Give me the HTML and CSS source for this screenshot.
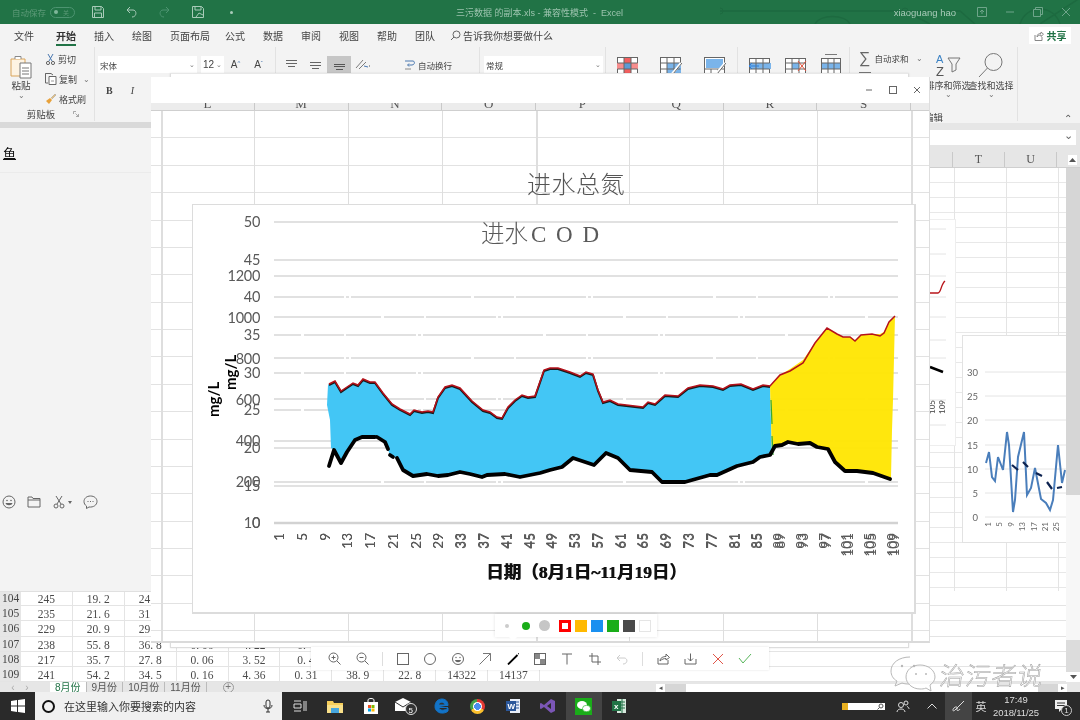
FILE: index.html
```html
<!DOCTYPE html>
<html lang="zh">
<head>
<meta charset="utf-8">
<title>Excel</title>
<link rel="stylesheet" href="styles.css">
</head>
<body>
<div class="desk">
  <header class="titlebar">
    <svg class="circuit" width="360" height="24" viewBox="0 0 360 24"><path d="M0 11H185L210 24M185 11L240 11L255 24M95 24C100 14 125 14 130 24M300 24C306 4 334 4 340 24M320 24L360 -2" fill="none" stroke="#1d6a40" stroke-width="1.5"/><circle cx="0" cy="11" r="3" fill="none" stroke="#1d6a40"/><circle cx="185" cy="11" r="3" fill="none" stroke="#1d6a40"/></svg>
    <span class="autosave">自动保存</span>
    <span class="toggle"><i></i><b>关</b></span>
    <span class="qat"><svg width="14" height="14" viewBox="0 0 14 14"><path d="M1.5 1.5H10.5L12.5 3.5V12.5H1.5ZM4 1.5V5H10V1.5M3.5 12.5V8H10.5V12.5" fill="none" stroke="#a9cbb9"/></svg></span>
    <span class="qat"><svg width="14" height="14" viewBox="0 0 14 14"><path d="M3 5L6 2M3 5L6 8M3 5H9C13 5 13 12 8 12" fill="none" stroke="#a9cbb9"/></svg></span>
    <span class="qat"><svg width="14" height="14" viewBox="0 0 14 14"><path d="M11 5L8 2M11 5L8 8M11 5H5C1 5 1 12 6 12" fill="none" stroke="#4d9471"/></svg></span>
    <span class="qat"><svg width="14" height="14" viewBox="0 0 14 14"><path d="M1.5 1.5H10.5L12.5 3.5V12.5H1.5ZM4 1.5V5H10V1.5M5 12L8 8L12 10" fill="none" stroke="#a9cbb9"/></svg></span>
    <span class="qat-dot"></span>
    <span class="doc-title">三污数据 的副本.xls - 兼容性模式 &nbsp;- &nbsp;Excel</span>
    <span class="user">xiaoguang hao</span>
    <span class="wbtn"><svg width="10" height="10" viewBox="0 0 10 10"><path d="M.5 .5H9.5V9.5H.5ZM5 3V7M3 5L5 3L7 5" fill="none" stroke="#6ea58a"/></svg></span>
    <span class="wbtn"><svg width="10" height="10" viewBox="0 0 10 10"><path d="M1 5H9" stroke="#6ea58a"/></svg></span>
    <span class="wbtn"><svg width="10" height="10" viewBox="0 0 10 10"><path d="M.5 2.5H7.5V9.5H.5ZM2.5 2.5V.5H9.5V7.5H7.5" fill="none" stroke="#6ea58a"/></svg></span>
    <span class="wbtn"><svg width="10" height="10" viewBox="0 0 10 10"><path d="M1 1L9 9M9 1L1 9" stroke="#6ea58a"/></svg></span>
  </header>

  <nav class="tabs">
    <span>文件</span><span class="tab-on">开始</span><span>插入</span><span>绘图</span><span>页面布局</span><span class="tab-tight">公式</span><span>数据</span><span>审阅</span><span>视图</span><span>帮助</span><span>团队</span>
    <span class="tellme"><svg width="11" height="11" viewBox="0 0 11 11"><circle cx="6.5" cy="4.5" r="3.5" fill="none" stroke="#666"/><path d="M4 7L1 10" stroke="#666"/></svg>告诉我你想要做什么</span>
    <span class="share"><svg width="10" height="10" viewBox="0 0 10 10"><path d="M1 4V9.5H8V6M3 6C3 3 5 2.5 7 2.5V1L9.5 3.2L7 5.5V4C5.5 4 4 4.5 3 6Z" fill="none" stroke="#888"/></svg>共享</span>
  </nav>

  <section class="ribbon">
    <div class="group g-clip">
      <div class="g-body">
        <div class="paste">
          <svg width="22" height="25" viewBox="0 0 22 25"><path d="M1 5H15V22H1Z" fill="#fdf3e3" stroke="#d9a45b"/><path d="M5 5V2.5H11V5" fill="#fff" stroke="#888"/><path d="M10 9H21V24H10Z" fill="#fff" stroke="#777"/><path d="M12 14H19M12 17H19M12 20H19" stroke="#777"/></svg>
          <span>粘贴</span><em>⌄</em>
        </div>
        <div class="clip-list">
          <span><svg width="11" height="12" viewBox="0 0 11 12"><path d="M3 1L7 8M8 1L4 8" stroke="#4a78b0" fill="none"/><circle cx="3" cy="10" r="1.6" fill="none" stroke="#666"/><circle cx="8" cy="10" r="1.6" fill="none" stroke="#666"/></svg>剪切</span>
          <span><svg width="12" height="12" viewBox="0 0 12 12"><path d="M.5 2.5V.5H6L8 2M.5 .5V10H3" fill="none" stroke="#666"/><path d="M4 3.5H11V11.5H4Z" fill="#fff" stroke="#666"/><path d="M6 8H9" stroke="#999"/></svg>复制<em>⌄</em></span>
          <span><svg width="12" height="12" viewBox="0 0 12 12"><path d="M1 8L4 11L7 7L5 5Z" fill="#e8a13a"/><path d="M6 5L10 1L11 2L7 6" fill="#e9c27c" stroke="#999" stroke-width=".5"/></svg>格式刷</span>
        </div>
      </div>
      <div class="g-label">剪贴板<svg width="6" height="6" viewBox="0 0 6 6"><path d="M.5 3V.5H3M2.5 2.5L5.5 5.5M5.5 3V5.5H3" fill="none" stroke="#888" stroke-width=".7"/></svg></div>
    </div>

    <div class="group g-font">
      <div class="r-row">
        <span class="combo c-font">宋体<em>⌄</em></span>
        <span class="combo c-size">12<em>⌄</em></span>
        <span class="grow">A<sup>^</sup></span>
        <span class="grow">A<sup>ˇ</sup></span>
      </div>
      <div class="r-row r-style"><b>B</b><i>I</i></div>
    </div>

    <div class="group g-align">
      <span class="al"><svg width="13" height="10" viewBox="0 0 13 10"><path d="M1 .5H12M1 3.5H12M3 6.5H10" stroke="#666"/></svg></span>
      <span class="al"><svg width="13" height="10" viewBox="0 0 13 10"><path d="M1 2.5H12M1 5.5H12M3 8.5H10" stroke="#666"/></svg></span>
      <span class="al al-on"><svg width="13" height="10" viewBox="0 0 13 10"><path d="M1 4.5H12M1 6.5H12M3 9.5H10" stroke="#555"/></svg></span>
      <span class="al"><svg width="16" height="11" viewBox="0 0 16 11"><path d="M1 9L8 1M4 10L11 3" stroke="#7b7b7b"/><path d="M9 7L13 8" stroke="#4a78b0"/><path d="M14 7H15" stroke="#555"/></svg></span>
      <span class="wrap"><svg width="11" height="12" viewBox="0 0 11 12"><path d="M1 2H9C11 2 11 6 8 6H4M5 4.5L3.5 6L5 7.5" fill="none" stroke="#4a78b0"/><path d="M1 10H7" stroke="#888"/></svg>自动换行</span>
    </div>

    <div class="group g-num"><span class="combo c-num">常规<em>⌄</em></span></div>

    <div class="group g-tables">
      <svg width="21" height="18" viewBox="0 0 21 18"><rect x=".5" y=".5" width="20" height="17" fill="#fff" stroke="#666"/><path d="M0 6H21V12H0Z" fill="#f78d8d"/><rect x="7" y="1" width="7" height="16" fill="#f25f5f"/><rect x="7" y="6" width="7" height="6" fill="#5b9bd5"/><path d="M.5 6H20.5M.5 12H20.5M7 .5V17.5M14 .5V17.5" stroke="#666"/></svg>
      <svg width="22" height="18" viewBox="0 0 22 18"><rect x=".5" y=".5" width="20" height="17" fill="#fff" stroke="#666"/><rect x="7" y="6" width="14" height="12" fill="#7ab4ea"/><path d="M.5 6H20.5M.5 12H20.5M7 .5V17.5M14 .5V17.5" stroke="#666"/><path d="M12 17L21 6" stroke="#fff" stroke-width="2.5"/><path d="M13 17L22 6" stroke="#666"/></svg>
      <svg width="22" height="18" viewBox="0 0 22 18"><rect x=".5" y=".5" width="20" height="17" fill="#fff" stroke="#666"/><rect x="2" y="2" width="17" height="9" fill="#7ab4ea"/><path d="M.5 12H20.5M7 12V17.5M14 12V17.5" stroke="#666"/><path d="M12 17L21 6" stroke="#fff" stroke-width="2.5"/><path d="M13 17L22 6" stroke="#666"/></svg>
    </div>

    <div class="group g-cells">
      <svg width="22" height="16" viewBox="0 0 22 16"><rect x=".5" y=".5" width="20" height="15" fill="#fff" stroke="#666"/><rect x="1" y="5" width="21" height="6" fill="#7ab4ea"/><path d="M.5 5H20.5M.5 11H20.5M7 .5V15.5M14 .5V15.5" stroke="#666"/><path d="M0 8H10M3 5L0 8L3 11" fill="none" stroke="#2f7ed8"/></svg>
      <svg width="22" height="16" viewBox="0 0 22 16"><rect x=".5" y=".5" width="20" height="15" fill="#fff" stroke="#666"/><rect x="7" y="5" width="7" height="6" fill="#7ab4ea"/><path d="M.5 5H20.5M.5 11H20.5M7 .5V15.5M14 .5V15.5" stroke="#666"/><path d="M13 3L21 13M21 3L13 13" stroke="#e0533d"/></svg>
      <svg width="20" height="20" viewBox="0 0 20 20"><rect x=".5" y="4.5" width="19" height="15" fill="#fff" stroke="#666"/><rect x="1" y="9" width="18" height="6" fill="#7ab4ea"/><path d="M.5 9H19.5M.5 15H19.5M7 4.5V19.5M13 4.5V19.5" stroke="#666"/><path d="M4 .5H16" stroke="#7a7a7a"/></svg>
    </div>

    <div class="group g-edit">
      <div class="sum"><span class="sigma">∑</span><span>自动求和</span><em>⌄</em></div>
      <div class="big"><svg width="26" height="26" viewBox="0 0 26 26"><text x="1" y="11" class="sort-a">A</text><text x="1" y="24" class="sort-z">Z</text><path d="M13 6H25L21 12V18L17 20V12Z" fill="none" stroke="#777"/></svg><span>排序和筛选</span><em>⌄</em></div>
      <div class="big"><svg width="26" height="26" viewBox="0 0 26 26"><circle cx="15.500" cy="10" r="8.500" fill="none" stroke="#777"/><path d="M9.500 16L1 25" stroke="#777"/></svg><span>查找和选择</span><em>⌄</em></div>
      <div class="g-edit-label">编辑</div>
    </div>
    <span class="collapse">⌃</span>
  </section>

  <section class="formula">
    <div class="f-box"><em>⌄</em></div>
    <div class="col-head"><span></span><span>T</span><span>U</span><span class="scroll-up"><svg width="7" height="4" viewBox="0 0 7 4"><path d="M0 4L3.500 0L7 4Z" fill="#555"/></svg></span></div>
  </section>

  <section class="work">
    <div class="sheet">
      <div class="data">
        <div class="row"><b>104</b><span>245</span><span>19. 2</span><span>24. 9</span></div>
        <div class="row"><b>105</b><span>235</span><span>21. 6</span><span>31. 2</span></div>
        <div class="row"><b>106</b><span>229</span><span>20. 9</span><span>29. 5</span></div>
        <div class="row"><b>107</b><span>238</span><span>55. 8</span><span>36. 8</span><span>0. 06</span><span>4. 22</span><span>0. 4</span></div>
        <div class="row"><b>108</b><span>217</span><span>35. 7</span><span>27. 8</span><span>0. 06</span><span>3. 52</span><span>0. 4</span></div>
        <div class="row"><b>109</b><span>241</span><span>54. 2</span><span>34. 5</span><span>0. 16</span><span>4. 36</span><span>0. 31</span><span>38. 9</span><span>22. 8</span><span>14322</span><span>14137</span></div>
      </div>
    </div>
    <div class="vscroll"><i class="v-thumb"></i><i class="v-free"></i><i class="v-low"></i><i class="v-arrow"><svg width="7" height="4" viewBox="0 0 7 4"><path d="M0 0L3.500 4L7 0Z" fill="#555"/></svg></i></div>
  </section>

  <footer class="sheetbar">
    <span class="nav">‹</span><span class="nav">›</span>
    <span class="st st-on">8月份</span><span class="st">9月份</span><span class="st">10月份</span><span class="st">11月份</span>
    <span class="add">+</span>
    <div class="hscroll"><i class="h-arrow">◂</i><i class="h-track1"></i><i class="h-thumb"></i><i class="h-track2"></i><i class="h-arrow">▸</i></div>
  </footer>

  <footer class="taskbar">
    <span class="start"><svg width="14" height="14" viewBox="0 0 14 14"><path d="M0 2L6 1V6.500H0ZM7 1L14 0V6.500H7ZM0 7.500H6V13L0 12ZM7 7.500H14V14L7 13Z" fill="#fff"/></svg></span>
    <div class="search">
      <span class="cortana"></span>
      <span class="s-text">在这里输入你要搜索的内容</span>
      <svg width="10" height="14" viewBox="0 0 10 14"><rect x="3" y="1" width="4" height="8" rx="2" fill="none" stroke="#333"/><path d="M1 6C1 11 9 11 9 6M5 10V13M3 13H7" fill="none" stroke="#333"/></svg>
    </div>
    <span class="tb"><svg width="14" height="12" viewBox="0 0 14 12"><path d="M1 1H8M1 11H8M1 4H8V8H1ZM11 1V11M13 1V11" fill="none" stroke="#ddd"/></svg></span>
    <span class="tb"><svg width="16" height="13" viewBox="0 0 16 13"><path d="M0 1H6L7 3H16V13H0Z" fill="#f6ce5b"/><rect x="0" y="5" width="16" height="8" fill="#f9e08a"/><rect x="4" y="8" width="8" height="5" fill="#47a7e0"/></svg></span>
    <span class="tb"><svg width="16" height="16" viewBox="0 0 16 16"><path d="M1 4H15V16H1Z" fill="#fff"/><path d="M5 5V2C5 0 11 0 11 2V5" fill="none" stroke="#fff"/><rect x="5" y="7" width="3" height="3" fill="#f25022"/><rect x="8.500" y="7" width="3" height="3" fill="#7fba00"/><rect x="5" y="10.500" width="3" height="3" fill="#00a4ef"/><rect x="8.500" y="10.500" width="3" height="3" fill="#ffb900"/></svg></span>
    <span class="tb"><svg width="24" height="18" viewBox="0 0 24 18"><path d="M1 5L9 1L17 5V14H1Z" fill="#fff"/><path d="M1 5L9 10L17 5" fill="none" stroke="#333"/><circle cx="17" cy="12" r="5.500" fill="#333" stroke="#ddd"/><text x="14.500" y="15.500" class="mail-n">5</text></svg></span>
    <span class="tb"><svg width="16" height="16" viewBox="0 0 16 16"><path d="M3 7.500H14C14 2 10 1 8 1C4 1 1 4 1 8.500C1 13 5 15.500 9 15C11 15 13 14 14 13V10C11 13 5 13 5 9.500H14" fill="#1273c7" stroke="#1273c7"/><path d="M5 6.500C5.500 4 10 4 10.500 6.500Z" fill="#333"/></svg></span>
    <span class="tb"><i class="chrome"></i></span>
    <span class="tb"><svg width="16" height="16" viewBox="0 0 16 16"><rect x="5" y="1" width="10" height="14" fill="#e8eef8"/><path d="M9 4H14M9 7H14M9 10H14" stroke="#2b579a"/><rect x="1" y="3" width="10" height="10" fill="#2b579a"/><text x="2.500" y="11" class="word-w">W</text></svg></span>
    <span class="tb"><svg width="16" height="16" viewBox="0 0 16 16"><path d="M11 1L15 3V13L11 15L4 9L1 11L0 10.500V5.500L1 5L4 7ZM11 5L7 8L11 11Z" fill="#7b56b6"/></svg></span>
    <span class="tb tb-on"><svg width="17" height="17" viewBox="0 0 17 17"><rect width="17" height="17" fill="#1aad19"/><ellipse cx="7" cy="7" rx="5" ry="4" fill="#fff"/><ellipse cx="11.500" cy="10.500" rx="4" ry="3.200" fill="#fff" stroke="#1aad19" stroke-width=".6"/></svg></span>
    <span class="tb"><svg width="16" height="16" viewBox="0 0 16 16"><rect x="6" y="1" width="9" height="14" fill="#d6e8dc"/><path d="M8 4H14M8 7H14M8 10H14M11 1V15" stroke="#217346"/><rect x="1" y="3" width="9" height="10" fill="#217346"/><text x="3" y="11" class="word-w">x</text></svg></span>
    <div class="tray">
      <span class="tray-search"><i></i><svg width="7" height="7" viewBox="0 0 7 7"><circle cx="4" cy="3" r="2" fill="none" stroke="#555"/><path d="M2.500 4.500L.5 6.500" stroke="#555"/></svg></span>
      <span class="ti ti-people"><svg width="14" height="13" viewBox="0 0 14 13"><circle cx="5" cy="5" r="2.500" fill="none" stroke="#ddd"/><path d="M1 12C1 8 9 8 9 12" fill="none" stroke="#ddd"/><circle cx="10" cy="3" r="2" fill="none" stroke="#ddd"/><path d="M11 6.500C12.500 7 13 8 13 9" fill="none" stroke="#ddd"/></svg></span>
      <span class="ti ti-up"><svg width="10" height="6" viewBox="0 0 10 6"><path d="M.5 5.500L5 1L9.500 5.500" fill="none" stroke="#ddd"/></svg></span>
      <span class="ti ti-pen"><svg width="13" height="13" viewBox="0 0 13 13"><path d="M12 1L5 8L3 10C1 12 0 10 2 8C4 6 6 7 5 9C4 11 7 11 8 9" fill="none" stroke="#ddd"/></svg></span>
      <span class="ti ti-lang">英</span>
      <span class="clock"><span>17:49</span><span>2018/11/25</span></span>
      <span class="ti ti-note"><svg width="14" height="14" viewBox="0 0 14 14"><path d="M1 1H13V10H8L5 13V10H1Z" fill="#eee"/><path d="M3 4H11M3 6.500H11" stroke="#333"/></svg><b>1</b></span>
    </div>
  </footer>

  <!-- Left chat window -->
  <aside class="chat">
    <div class="chat-band"></div>
    <div class="chat-name"><u>鱼</u></div>
    <div class="chat-tools">
      <svg width="14" height="14" viewBox="0 0 14 14"><circle cx="7" cy="7" r="6" fill="none" stroke="#666"/><circle cx="5" cy="5.500" r=".8" fill="#666"/><circle cx="9" cy="5.500" r=".8" fill="#666"/><path d="M3.500 8H10.500C10 11 4 11 3.500 8Z" fill="#666"/></svg>
      <svg width="14" height="12" viewBox="0 0 14 12"><path d="M1 1H5L6 2.500H13V11H1ZM1 4H13" fill="none" stroke="#666"/></svg>
      <span class="sc"><svg width="14" height="14" viewBox="0 0 14 14"><path d="M4 1L9 9M10 1L5 9" stroke="#666" fill="none"/><circle cx="4" cy="11" r="2" fill="none" stroke="#666"/><circle cx="10" cy="11" r="2" fill="none" stroke="#666"/></svg><i></i></span>
      <svg width="15" height="14" viewBox="0 0 15 14"><path d="M7.500 1C3.500 1 1 3.500 1 6.500C1 8.500 2 10 3.500 11V13.500L6 12C10.500 12.500 14 10 14 6.500C14 3.500 11.500 1 7.500 1Z" fill="none" stroke="#666"/><path d="M4.500 6.500H5.500M7 6.500H8M9.500 6.500H10.500" stroke="#666"/></svg>
    </div>
  </aside>

  <!-- Right-side embedded charts on the sheet -->
  <div class="mini-card">
    <svg width="27" height="227" viewBox="929 219 27 227">
      <g class="mini-grid"><path d="M929 229H946M929 254H946M929 276H946M929 297H946M929 317H946M929 340H946M929 358H946M929 400H946M929 425H946"/></g>
      <path d="M929 293H938C941 293 941 284 945 281" fill="none" stroke="#b8141a" stroke-width="1.400"/>
      <path d="M930 367L943 372" stroke="#000" stroke-width="2.500"/>
      <text transform="translate(935 414) rotate(-90)" class="mini-x">105</text>
      <text transform="translate(945 414) rotate(-90)" class="mini-x">109</text>
    </svg>
  </div>
  <div class="blue-card">
    <svg width="104" height="208" viewBox="962 335 104 208">
      <path class="blue-grid" d="M985 372H1066M985 396H1066M985 420H1066M985 445H1066M985 469H1066M985 493H1066M985 517H1066"/>
      <text x="978" y="376" class="blue-y">30</text><text x="978" y="400" class="blue-y">25</text><text x="978" y="424" class="blue-y">20</text><text x="978" y="449" class="blue-y">15</text><text x="978" y="473" class="blue-y">10</text><text x="978" y="497" class="blue-y">5</text><text x="978" y="521" class="blue-y">0</text>
      <polyline points="986,463 989,452 992,477 995,481 998,457 1003,470 1007,432 1009,445 1013,512 1015,500 1018,457 1024,432 1027,495 1031,488 1035,468 1041,499 1046,503 1050,510 1053,500 1058,445 1062,483 1065,470" fill="none" stroke="#4a7ebb" stroke-width="2"/>
      <path d="M1012 465L1018 470M1023 462L1028 467M1036 473L1042 476M1047 482L1052 489M1057 488L1062 487" stroke="#0d2350" stroke-width="2.200" fill="none"/>
      <text transform="translate(991 522) rotate(-90)" class="blue-x">1</text><text transform="translate(1002 522) rotate(-90)" class="blue-x">5</text><text transform="translate(1014 522) rotate(-90)" class="blue-x">9</text><text transform="translate(1025 522) rotate(-90)" class="blue-x">13</text><text transform="translate(1037 522) rotate(-90)" class="blue-x">17</text><text transform="translate(1048 522) rotate(-90)" class="blue-x">21</text><text transform="translate(1059 522) rotate(-90)" class="blue-x">25</text>
    </svg>
  </div>

  <!-- Screenshot windows -->
  <div class="win-back"></div>
  <div class="win-main">
    <div class="win-title">
      <svg width="8" height="8" viewBox="0 0 8 8"><path d="M1 4H7" stroke="#666"/></svg>
      <svg width="8" height="8" viewBox="0 0 8 8"><rect x=".5" y=".5" width="7" height="7" fill="none" stroke="#666"/></svg>
      <svg width="8" height="8" viewBox="0 0 8 8"><path d="M1 1L7 7M7 1L1 7" stroke="#666"/></svg>
    </div>
    <div class="win-head"><span>L</span><span>M</span><span>N</span><span>O</span><span>P</span><span>Q</span><span>R</span><span>S</span></div>
    <div class="win-grid">
      <div class="under-title">进水总氮</div>
      <div class="chart">
        <svg class="chart-svg" width="723" height="409" viewBox="192 204 723 409">
          <g class="grid-lines">
            <path d="M274 222H898M274 260H898M274 276H898"/>
            <path class="gap" d="M274 297H898M274 358H898M274 441H898"/>
            <path class="gap gap2" d="M274 317H898M274 399H898M274 482H898"/>
            <path class="gap gap3" d="M274 335H898M274 373H898M274 410H898"/>
            <path d="M274 448H898"/>
            <path d="M274 486H898"/>
            <path class="base" d="M274 523H898"/>
          </g>
          <path fill="#43c6f5" d="M328,385 335,381 341,391 347,387 353,383 358,385 363,379 370,382 375,382 383,393 392,404 400,409 410,414 414,410 422,412 428,411 433,412 438,397 445,387 452,385 460,388 472,401 483,410 490,412 497,417 502,418 508,407 515,400 522,395 528,397 535,396 544,370 550,368 558,368 570,372 580,376 586,372 593,374 598,390 603,402 610,400 618,404 643,407 648,402 655,404 665,395 678,396 688,388 700,385 713,386 723,389 730,385 741,384 753,389 763,385 770,386 772,455 760,457 753,462 737,466 717,475 710,475 685,482 662,482 652,472 630,470 618,458 606,453 594,465 573,458 562,467 550,470 540,473 520,477 505,474 487,475 482,477 470,474 460,472 448,475 438,476 427,474 413,476 403,470 397,458 390,455 385,442 375,437 362,437 355,440 347,452 341,463 334,450 331,448 330,420 327,405Z"/>
          <path fill="#ffe600" fill-opacity=".95" d="M770,386 780,375 790,369 803,360 815,343 827,328 837,334 843,337 850,337 855,341 861,335 872,334 880,334 884,332 889,322 895,316 893,400 892,430 891,478 873,473 857,471 845,471 835,462 828,449 817,447 810,443 798,444 788,442 782,445 775,446 772,455Z"/>
          <path d="M771 400L772 424M772 436L773 455" stroke="#35a835" stroke-width="1.200"/>
          <polyline class="up-black" points="329,385 335,382 341,392 347,388 353,384 358,386 363,380 370,383 375,383 383,394 392,405 400,410 410,415 414,411 422,413 428,412 433,413 438,398 445,388 452,386 460,389 472,402 483,411 490,413 497,418 502,419 508,408 515,401 522,396 528,398 535,397 544,371 550,369 558,369 570,373 580,377 586,373 593,375 598,391 603,403 610,401 618,405 643,408 648,403 655,405 665,396 678,397 688,389 700,386 713,387 723,390 730,386 741,385 753,390 763,386 770,387"/>
          <polyline class="up-red" points="329,384 335,381 341,391 347,387 353,383 358,385 363,379 370,382 375,382 383,393 392,404 400,409 410,414 414,410 422,412 428,411 433,412 438,397 445,387 452,385 460,388 472,401 483,410 490,412 497,417 502,418 508,407 515,400 522,395 528,397 535,396 544,370 550,368 558,368 570,372 580,376 586,372 593,374 598,390 603,402 610,400 618,404 643,407 648,402 655,404 665,395 678,396 688,388 700,385 713,386 723,389 730,385 741,384 753,389 763,385 770,386 780,375 790,371 803,363 815,343 827,328 837,334 843,337 850,337 855,341 861,335 872,334 880,336 884,333 889,322 895,316"/>
          <polyline class="low" points="329,466 334,450 341,463 347,452 355,440 362,437 375,437"/>
          <polyline class="low" points="377,437 385,442 388,449"/>
          <polyline class="low" points="390,455 393,457"/>
          <polyline class="low" points="397,458 403,470 413,476 427,474 438,476 448,475 460,472 470,474 482,477 487,475 505,474 520,477 540,473 550,470 562,467 573,458 594,465 606,453 618,458 630,470 652,472 662,482 685,482 710,475 717,475 737,466 753,462 760,457 770,455 775,446 782,445 788,442 798,444 810,443 817,447 828,449 835,462 845,471 857,471 873,473 890,479"/>
          <g class="y-a"><text x="260" y="227">50</text><text x="260" y="265">45</text><text x="260" y="302">40</text><text x="260" y="340">35</text><text x="260" y="378">30</text><text x="260" y="415">25</text><text x="260" y="453">20</text><text x="260" y="491">15</text><text x="260" y="528">10</text></g>
          <g class="y-a"><text x="260" y="281">1200</text><text x="260" y="323">1000</text><text x="260" y="364">800</text><text x="260" y="405">600</text><text x="260" y="446">400</text><text x="260" y="487">200</text><text x="260" y="528">0</text></g>
          <text class="unit" transform="translate(219 417) rotate(-90)">mg/L</text>
          <text class="unit" transform="translate(236 390) rotate(-90)">mg/L</text>
          <g id="xa" class="x-a">
            <text transform="translate(284 533) rotate(-90)">1</text><text transform="translate(307 533) rotate(-90)">5</text><text transform="translate(330 533) rotate(-90)">9</text><text transform="translate(352 533) rotate(-90)">13</text><text transform="translate(375 533) rotate(-90)">17</text><text transform="translate(398 533) rotate(-90)">21</text><text transform="translate(421 533) rotate(-90)">25</text><text transform="translate(443 533) rotate(-90)">29</text><text transform="translate(466 533) rotate(-90)">33</text><text transform="translate(489 533) rotate(-90)">37</text><text transform="translate(512 533) rotate(-90)">41</text><text transform="translate(535 533) rotate(-90)">45</text><text transform="translate(557 533) rotate(-90)">49</text><text transform="translate(580 533) rotate(-90)">53</text><text transform="translate(603 533) rotate(-90)">57</text><text transform="translate(626 533) rotate(-90)">61</text><text transform="translate(648 533) rotate(-90)">65</text><text transform="translate(671 533) rotate(-90)">69</text><text transform="translate(694 533) rotate(-90)">73</text><text transform="translate(717 533) rotate(-90)">77</text><text transform="translate(740 533) rotate(-90)">81</text><text transform="translate(762 533) rotate(-90)">85</text><text transform="translate(785 533) rotate(-90)">89</text><text transform="translate(808 533) rotate(-90)">93</text><text transform="translate(831 533) rotate(-90)">97</text><text transform="translate(853 533) rotate(-90)">101</text><text transform="translate(876 533) rotate(-90)">105</text><text transform="translate(899 533) rotate(-90)">109</text>
          </g>
          <use href="#xa" transform="translate(279 0) scale(.997 1) translate(-279 0)"/>
          <text class="date" x="486" y="578">日期（8月1日~11月19日）</text>
          <text class="date" x="486.700" y="578">日期（8月1日~11月19日）</text>
        </svg>
        <div class="chart-title">进水<span>C O D</span></div>
      </div>
    </div>
  </div>

  <div class="colors">
    <i class="dot d1"></i><i class="dot d2"></i><i class="dot d3"></i>
    <i class="sw sw-red"></i><i class="sw sw-yellow"></i><i class="sw sw-blue"></i><i class="sw sw-green"></i><i class="sw sw-dark"></i><i class="sw sw-white"></i>
  </div>

  <div class="toolbar">
    <span class="tool"><svg width="13" height="13" viewBox="0 0 13 13"><circle cx="5.500" cy="5.500" r="4.500" fill="none" stroke="#666"/><path d="M9 9L12.500 12.500M3.500 5.500H7.500M5.500 3.500V7.500" stroke="#666"/></svg></span>
    <span class="tool"><svg width="13" height="13" viewBox="0 0 13 13"><circle cx="5.500" cy="5.500" r="4.500" fill="none" stroke="#666"/><path d="M9 9L12.500 12.500M3.500 5.500H7.500" stroke="#666"/></svg></span>
    <span class="sep"></span>
    <span class="tool"><svg width="12" height="12" viewBox="0 0 12 12"><rect x=".5" y=".5" width="11" height="11" fill="none" stroke="#666"/></svg></span>
    <span class="tool"><svg width="12" height="12" viewBox="0 0 12 12"><circle cx="6" cy="6" r="5.500" fill="none" stroke="#666"/></svg></span>
    <span class="tool"><svg width="12" height="12" viewBox="0 0 12 12"><circle cx="6" cy="6" r="5.500" fill="none" stroke="#666"/><circle cx="4" cy="4.500" r=".7" fill="#666"/><circle cx="8" cy="4.500" r=".7" fill="#666"/><path d="M3 7H9C8.500 10 3.500 10 3 7Z" fill="#666"/></svg></span>
    <span class="tool"><svg width="12" height="12" viewBox="0 0 12 12"><path d="M.5 11.500L11.500 .5M4 .5H11.500V8" fill="none" stroke="#777"/></svg></span>
    <span class="tool"><svg width="12" height="12" viewBox="0 0 12 12"><path d="M1 11.500L10.500 2" stroke="#000" stroke-width="1.800"/><path d="M11 1L12 .5" stroke="#000"/></svg></span>
    <span class="tool"><svg width="12" height="12" viewBox="0 0 12 12"><rect x=".5" y=".5" width="11" height="11" fill="none" stroke="#666"/><rect x="1" y="1" width="5" height="5" fill="#888"/><rect x="6" y="6" width="5" height="5" fill="#888"/></svg></span>
    <span class="tool"><svg width="12" height="12" viewBox="0 0 12 12"><path d="M1 1H11M6 1V11.500" stroke="#666" fill="none"/></svg></span>
    <span class="tool"><svg width="12" height="12" viewBox="0 0 12 12"><path d="M3 0V9H12M0 3H9V12" stroke="#666" fill="none"/></svg></span>
    <span class="tool"><svg width="12" height="12" viewBox="0 0 12 12"><path d="M1 5L4 2M1 5L4 8M1 5H8C12 5 12 11 7 11" fill="none" stroke="#ccc"/></svg></span>
    <span class="sep"></span>
    <span class="tool"><svg width="13" height="12" viewBox="0 0 13 12"><path d="M1 5V11H11V7M3 8C3 5 6 3.500 9 3.500V1L12.500 4.500L9 7V5.500C7 5.500 5 6 3 8Z" fill="none" stroke="#666"/></svg></span>
    <span class="tool"><svg width="13" height="12" viewBox="0 0 13 12"><path d="M1 6V11H12V6M6.500 .5V8M4 5.500L6.500 8L9 5.500" fill="none" stroke="#666"/></svg></span>
    <span class="tool"><svg width="12" height="12" viewBox="0 0 12 12"><path d="M1 1L11 11M11 1L1 11" stroke="#e0574a"/></svg></span>
    <span class="tool"><svg width="14" height="11" viewBox="0 0 14 11"><path d="M1 5L5 10L13 1" fill="none" stroke="#57b55a"/></svg></span>
  </div>

  <div class="watermark">
    <svg width="46" height="36" viewBox="0 0 46 36"><path d="M20 1C9 1 1 7 1 15C1 19 3 23 7 25L5 30L12 27C15 28 17 28 20 28" fill="#fff" fill-opacity=".4" stroke="#b8b8b8"/><path d="M30 9C22 9 16 14 16 21C16 27 22 33 30 33C32 33 34 33 36 32L41 35L40 29C43 27 45 24 45 21C45 14 38 9 30 9Z" fill="#fff" fill-opacity=".6" stroke="#b8b8b8"/><circle cx="12" cy="10" r="1.200" fill="#b8b8b8"/><circle cx="24" cy="10" r="1.200" fill="#b8b8b8"/><circle cx="26" cy="18" r="1" fill="#b8b8b8"/><circle cx="36" cy="18" r="1" fill="#b8b8b8"/></svg>
    <span>治污者说</span>
  </div>
</div>
</body>
</html>
```

FILE: styles.css
```css
* { box-sizing: border-box; }
html, body { margin: 0; padding: 0; }
body { background: #fff; }
em { font-style: normal; }

.desk {
  position: relative;
  width: 1080px;
  height: 720px;
  overflow: hidden;
  display: flex;
  flex-direction: column;
  font-family: "Liberation Sans", "Noto Sans CJK SC", sans-serif;
  color: #444;
  background: #fff;
  filter: blur(.3px);
}

/* Title bar */
.titlebar { position: relative; flex: 0 0 24px; display: flex; align-items: center; background: #217346; padding-left: 12px; color: #a9cbb9; font-size: 10px; }
.circuit { position: absolute; left: 720px; top: 0; }
.titlebar > span { position: relative; }
.autosave { width: 33px; color: #5d9a78; font-size: 8.500px; white-space: nowrap; }
.toggle { margin-left: 5px; width: 25px; height: 11px; border: 1px solid #4d9471; border-radius: 6px; display: flex; align-items: center; gap: 5px; padding-left: 3px; margin-right: 6px; }
.toggle i { width: 4px; height: 4px; border-radius: 50%; background: #7fb69a; }
.toggle b { font-weight: 400; font-size: 6px; color: #5d9a78; }
.qat { width: 33.500px; display: flex; justify-content: center; }
.qat-dot { width: 3px; height: 3px; margin-left: 15px; background: #a9cbb9; border-radius: 50%; }
.doc-title { margin-left: 223px; white-space: nowrap; color: #9cc3ae; font-size: 9px; }
.user { margin-left: auto; margin-right: 12px; font-size: 9.500px; color: #a9cbb9; }
.wbtn { width: 28px; display: flex; justify-content: center; }

/* Tabs */
.tabs { flex: 0 0 23px; display: flex; align-items: center; gap: 18px; padding: 0 9px 0 14px; background: #f3f3f3; font-size: 10px; position: relative; color: #444; }
.tab-on { margin-left: 4px; font-weight: 700; position: relative; color: #333; }
.tab-on::after { content: ""; position: absolute; left: 0; right: 0; bottom: -3px; height: 2px; background: #217346; }
.tab-tight { margin-left: -3px; }
.tellme { display: flex; align-items: center; gap: 2px; margin-left: -3px; }
.share { margin-left: auto; display: flex; align-items: center; gap: 3px; background: #fff; height: 17px; width: 42px; justify-content: center; color: #217346; font-weight: 700; }

/* Ribbon */
.ribbon { position: relative; flex: 0 0 76px; display: flex; background: #f3f3f3; font-size: 9px; }
.group { height: 74px; border-right: 1px solid #e2e2e2; flex: none; }
.g-clip { width: 95px; display: flex; flex-direction: column; }
.g-body { flex: 1; display: flex; }
.paste { width: 42px; padding-top: 7px; display: flex; flex-direction: column; align-items: center; }
.paste span { margin-top: 0; line-height: 14px; font-size: 9.500px; }
.paste em { line-height: 6px; font-size: 8px; color: #777; }
.clip-list { padding: 5px 0 0 3px; display: flex; flex-direction: column; gap: 6px; }
.clip-list span { display: flex; align-items: center; gap: 2px; height: 14px; white-space: nowrap; }
.clip-list em, .sum em, .big em { font-size: 8px; color: #777; margin-left: 4px; }
.g-label { height: 16px; display: flex; align-items: center; justify-content: center; gap: 18px; padding-left: 12px; font-size: 9.500px; }
.g-font { width: 181px; padding: 9px 0 0 3px; }
.r-row { display: flex; align-items: center; }
.combo { height: 17px; background: #fff; display: flex; align-items: center; justify-content: space-between; padding: 0 2px 0 2px; font-size: 8.500px; }
.combo em { font-size: 7px; color: #777; }
.c-font { width: 99px; }
.c-size { width: 23px; margin-left: 4px; font-size: 10px; }
.grow { width: 23px; text-align: center; font-size: 10px; margin-left: 0; }
.grow:first-of-type { margin-left: 3px; }
.grow sup { font-size: 6px; color: #4a78b0; vertical-align: 3px; line-height: 0; }
.r-style { margin-top: 12px; padding-left: 8px; font-size: 10px; font-family: "Liberation Serif", serif; gap: 18px; }
.g-align { width: 204px; display: flex; align-items: flex-start; padding: 9px 0 0 3px; }
.al { width: 24px; height: 17px; display: flex; align-items: center; justify-content: center; }
.al-on { background: #c6c6c6; }
.wrap { display: flex; align-items: center; gap: 3px; margin-left: 29px; height: 17px; font-size: 8.500px; white-space: nowrap; }
.g-num { width: 126px; padding: 9px 0 0 4px; }
.c-num { width: 119px; }
.g-tables { width: 132px; display: flex; align-items: flex-start; gap: 22px; padding: 10px 0 0 11px; }
.g-cells { width: 112px; display: flex; align-items: flex-start; gap: 14px; padding: 11px 0 0 11px; }
.g-cells svg:last-child { margin-top: -4px; }
.g-edit { width: 168px; position: relative; display: flex; align-items: flex-start; padding: 0 0 0 9px; }
.sum { display: flex; align-items: center; gap: 4px; height: 16px; margin-top: 3px; width: 67px; white-space: nowrap; flex: none; position: relative; font-size: 8.500px; }
.sum::after { content: ""; position: absolute; left: 0; top: 22px; width: 12px; height: 1px; background: #777; }
.sigma { font-size: 16px; line-height: 16px; color: #666; }
.big { width: 44px; display: flex; flex-direction: column; align-items: center; padding-top: 5px; white-space: nowrap; font-size: 9px; margin-right: -1px; }
.big span { line-height: 12px; margin-top: 2px; }
.big em { line-height: 6px; margin: 0; }
.sort-a { font: 11px "Liberation Sans", sans-serif; fill: #3b82c4; }
.sort-z { font: 13px "Liberation Sans", sans-serif; fill: #555; }
.g-edit-label { position: absolute; left: 74px; top: 63px; font-size: 9.500px; }
.collapse { position: absolute; left: 1064px; top: 66px; font-size: 10px; color: #555; }

/* Formula bar and column heads */
.formula { flex: 0 0 45px; background: #e6e6e6; padding-top: 7px; }
.f-box { height: 15px; background: #fff; margin-right: 4px; display: flex; justify-content: flex-end; padding-right: 3px; color: #666; font-size: 11px; line-height: 11px; }
.col-head { margin-top: 7px; height: 16px; display: flex; padding-left: 901px; background: #e6e6e6; border-bottom: 1px solid #cfcfcf; font: 12px "Liberation Serif", serif; color: #555; }
.col-head span { width: 52px; text-align: center; border-right: 1px solid #c9c9c9; line-height: 15px; }
.col-head .scroll-up { width: 9px; height: 10px; margin: 3px 0 0 11px; border: 0; background: #fff; display: flex; align-items: center; justify-content: center; }

/* Sheet */
.work { flex: 1; display: flex; min-height: 0; }
.sheet {
  flex: 1;
  display: flex;
  flex-direction: column;
  justify-content: flex-end;
  background:
    repeating-linear-gradient(to right, transparent 0 50.900px, #e4e4e4 50.900px 51.900px) 21px 0,
    repeating-linear-gradient(to bottom, transparent 0 14px, #e8e8e8 14px 15px);
}
.data { background: #fff; font: 11.500px "Liberation Serif", serif; color: #4a4a4a; }
.row { height: 15.170px; display: flex; align-items: center; border-bottom: 1px solid #e4e4e4; white-space: pre; background: linear-gradient(to right, #e6e6e6 21px, transparent 21px); }
.row b { width: 21px; font-weight: 400; text-align: center; flex: none; color: #444; line-height: 16px; }
.row span { width: 51.900px; text-align: center; flex: none; height: 100%; line-height: 16px; border-right: 1px solid #e4e4e4; }
.vscroll { flex: 0 0 14px; display: flex; flex-direction: column; background: #fff; }
.vscroll i { display: block; }
.v-thumb { height: 327px; background: #d6d6d6; }
.v-free { height: 145px; background: #f7f7f7; }
.v-low { height: 32px; background: #dcdcdc; }
.v-arrow { height: 10px; display: flex !important; align-items: center; justify-content: center; }

/* Sheet tabs */
.sheetbar { flex: 0 0 10px; display: flex; align-items: flex-start; background: #e6e6e6; overflow: hidden; font-size: 10px; line-height: 11px; }
.nav { width: 14px; text-align: center; color: #aaa; margin-left: 6px; }
.nav + .nav { margin-left: 0; margin-right: 16px; }
.st { padding: 0 5px; border-right: 1px solid #bbb; color: #555; white-space: nowrap; }
.st-on { background: #fff; color: #217346; border-bottom: 1px solid #217346; }
.add { margin-left: 16px; width: 11px; height: 11px; border: 1px solid #999; border-radius: 50%; line-height: 8px; text-align: center; color: #777; font-size: 10px; }
.hscroll { margin-left: auto; margin-top: 2px; margin-right: 13px; display: flex; height: 8px; width: 411px; }
.hscroll i { display: block; font-style: normal; font-size: 7px; line-height: 8px; text-align: center; color: #555; }
.h-arrow { width: 9px; background: #fff; }
.h-track1 { width: 21px; background: #d6d6d6; }
.h-thumb { flex: 1; background: #fff; }
.h-track2 { width: 20px; background: #d6d6d6; }

/* Taskbar */
.taskbar { flex: 0 0 28px; display: flex; align-items: center; background: #2a2a2a; color: #ddd; position: relative; }
.start { width: 35px; display: flex; justify-content: center; }
.search { width: 247px; height: 28px; background: #f0f0f0; display: flex; align-items: center; padding-left: 7px; color: #333; }
.cortana { width: 13px; height: 13px; border: 2px solid #111; border-radius: 50%; flex: none; }
.s-text { margin-left: 9px; font-size: 11px; width: 199px; white-space: nowrap; }
.tb { width: 35.500px; height: 28px; display: flex; align-items: center; justify-content: center; flex: none; }
.tb-on { background: #444; }
.chrome { display: block; width: 15px; height: 15px; border-radius: 50%; border: 3.500px solid transparent; background: radial-gradient(#4a8ff0 0 3.500px, #fff 3.500px) padding-box, conic-gradient(#e53935 0 120deg, #fbc02d 120deg 240deg, #43a047 240deg) border-box; }
.mail-n { font: 8px "Liberation Sans", sans-serif; fill: #fff; }
.word-w { font: 700 8px "Liberation Sans", sans-serif; fill: #fff; }
.tray { margin-left: auto; display: flex; align-items: center; height: 28px; }
.tray-search { width: 43px; height: 7px; margin-right: 3px; display: flex; align-items: center; background: #fff; justify-content: space-between; padding-right: 1px; }
.tray-search i { width: 6px; height: 7px; background: #e8b020; }
.ti { height: 28px; display: flex; align-items: center; justify-content: center; position: relative; }
.ti-people { width: 30px; }
.ti-up { width: 27px; }
.ti-pen { width: 27px; background: #444; }
.ti-lang { width: 18px; font-size: 11px; }
.clock { width: 52px; display: flex; flex-direction: column; align-items: center; font-size: 9.500px; line-height: 13px; letter-spacing: -.1px; }
.ti-note { width: 38px; }
.ti-note b { position: absolute; left: 19px; top: 13px; width: 11px; height: 11px; border: 1px solid #ccc; border-radius: 50%; background: #2a2a2a; font: 400 8px/9px "Liberation Sans", sans-serif; text-align: center; }

/* Chat window */
.chat { position: absolute; left: 0; top: 122px; width: 151px; height: 470px; background: #f3f3f3; border-bottom: 1px solid #e0e0e0; }
.chat-band { height: 6px; background: #d9d9d9; }
.chat-name { height: 45px; padding: 17px 0 0 3px; border-bottom: 1px solid #ebebeb; font-size: 13px; line-height: 18px; color: #111; }
.chat-tools { margin-top: 322px; padding-left: 2px; display: flex; align-items: center; gap: 11px; }
.sc { display: flex; align-items: center; gap: 2px; }
.sc i { width: 0; height: 0; border: 2px solid transparent; border-top: 3px solid #666; margin-top: 2px; }

/* Embedded charts */
.mini-card { position: absolute; left: 929px; top: 219px; width: 27px; height: 227px; background: #fff; border: 1px solid #eee; border-left: 0; }
.mini-card svg { display: block; margin-top: -1px; }
.mini-grid path { stroke: #e4e4e4; fill: none; }
.mini-x { font: 700 8px "Lato", sans-serif; fill: #666; text-anchor: start; }
.blue-card { position: absolute; left: 962px; top: 335px; width: 104px; height: 208px; background: #fff; border: 1px solid #e2e2e2; border-right: 0; }
.blue-card svg { display: block; margin: -1px 0 0 -1px; }
.blue-grid { stroke: #e4e4e4; fill: none; }
.blue-y { font: 9.500px "Lato", sans-serif; fill: #666; text-anchor: end; }
.blue-x { font: 8px "Lato", sans-serif; fill: #666; text-anchor: end; }

/* Screenshot windows */
.win-back { position: absolute; left: 170px; top: 73px; width: 739px; height: 575px; background: #fff; border: 1px solid #ddd; border-top-color: #e8e8e8; box-shadow: 0 0 2px rgba(0, 0, 0, .1); }
.win-main { position: absolute; left: 151px; top: 77px; width: 779px; height: 566px; display: flex; flex-direction: column; background: #fff; border-bottom: 2px solid #dadada; border-right: 1px solid #dedede; }
.win-title { flex: 0 0 26px; display: flex; align-items: center; justify-content: flex-end; gap: 16px; padding-right: 8px; background: #fff; }
.win-head { flex: 0 0 8px; overflow: hidden; display: flex; align-items: flex-end; padding-left: 10px; background: #ececec; border-bottom: 1px solid #cfcfcf; font: 13px/13px "Liberation Serif", serif; color: #555; }
.win-head span { width: 93.750px; height: 8px; display: flex; align-items: flex-end; justify-content: center; border-right: 1px solid #c9c9c9; }
.win-grid {
  flex: 1;
  padding: 56px 0 0 41px;
  background:
    linear-gradient(to right, #dedede 0 1.500px, transparent 1.500px 93px, #dedede 93px 94.500px, transparent 94.500px 187px, #dedede 187px 188.500px, transparent 188.500px 281px, #dedede 281px 282.500px, transparent 282.500px) 10px 0 / 375px 100% repeat-x,
    repeating-linear-gradient(to bottom, transparent 0 26.380px, #e2e2e2 26.380px 27.380px) 0 0;
}
.under-title { margin-left: 335px; height: 37px; font: 300 24px/32px "Noto Sans CJK SC", sans-serif; color: #555; letter-spacing: .5px; }
.chart { position: relative; width: 724px; height: 410px; background: #fff; border: 2px solid #dcdcdc; border-top-width: 1px; border-left-width: 1.500px; }
.chart-svg { display: block; margin: -1px 0 0 -1.500px; }
.chart-title { position: absolute; left: 288px; top: 12px; font: 300 23.500px/30px "Noto Sans CJK SC", sans-serif; color: #595959; white-space: nowrap; }
.chart-title span { font-family: "Liberation Serif", serif; font-size: 23px; font-weight: 400; margin-left: 3px; word-spacing: 3px; letter-spacing: .5px; }

.grid-lines path { stroke: #d8d8d8; stroke-width: 1.300; fill: none; }
.grid-lines .gap { stroke-dasharray: 70 2 3 2 120 3 40 2; }
.grid-lines .gap2 { stroke-dashoffset: 90; }
.grid-lines .gap3 { stroke-dashoffset: 170; }
.grid-lines .base { stroke-width: 2.500; stroke: #d2d2d2; }
.up-black { fill: none; stroke: #1a1a1a; stroke-width: 2; }
.up-red { fill: none; stroke: #b5121b; stroke-width: 1.500; }
.low { fill: none; stroke: #000; stroke-width: 3.800; stroke-linejoin: round; stroke-linecap: round; }
.y-a text { font: 14.500px "Lato", sans-serif; fill: #595959; text-anchor: end; letter-spacing: -.3px; }
.unit { font: 700 15px "Lato", sans-serif; fill: #000; }
.x-a text { font: 13.500px "Lato", sans-serif; fill: #595959; text-anchor: end; }
.date { font: 700 17.500px "Liberation Serif", "Noto Sans CJK SC", sans-serif; fill: #111; }

/* Capture palette and toolbar */
.colors { position: absolute; left: 495px; top: 614px; width: 162px; height: 23px; display: flex; align-items: center; background: #fff; box-shadow: 0 0 3px rgba(0, 0, 0, .12); padding-left: 10px; }
.colors::after { content: ""; position: absolute; left: 14px; top: 23px; border: 4px solid transparent; border-top-color: #fff; }
.dot { display: block; border-radius: 50%; flex: none; }
.d1 { width: 4px; height: 4px; background: #ccc; }
.d2 { width: 8px; height: 8px; background: #1aad19; margin-left: 13px; }
.d3 { width: 11px; height: 11px; background: #c6c6c6; margin-left: 9px; }
.sw { display: block; width: 12px; height: 12px; margin-left: 4px; flex: none; }
.sw-red { border: 3.500px solid #f00; background: #fff; margin-left: 9px; }
.sw-yellow { background: #ffb900; }
.sw-blue { background: #1a90f0; }
.sw-green { background: #1aad19; }
.sw-dark { background: #4a4a4a; }
.sw-white { background: #fff; border: 1px solid #e5e5e5; }
.toolbar { position: absolute; left: 311px; top: 647px; width: 458px; height: 23px; display: flex; align-items: center; background: #fff; box-shadow: 0 0 2px rgba(0, 0, 0, .12); padding-left: 10px; }
.tool { width: 27.400px; flex: none; display: flex; align-items: center; justify-content: center; }
.sep { width: 13.600px; flex: none; height: 14px; position: relative; }
.sep::after { content: ""; position: absolute; left: 6px; top: 0; width: 1px; height: 14px; background: #ddd; }

/* Watermark */
.watermark { position: absolute; left: 890px; top: 656px; display: flex; align-items: center; gap: 4px; }
.watermark span { font: 300 25px/30px "Noto Sans CJK SC", sans-serif; color: #fff; -webkit-text-stroke: .5px #9a9a9a; transform: skewX(-8deg); letter-spacing: 1px; white-space: nowrap; }
```
